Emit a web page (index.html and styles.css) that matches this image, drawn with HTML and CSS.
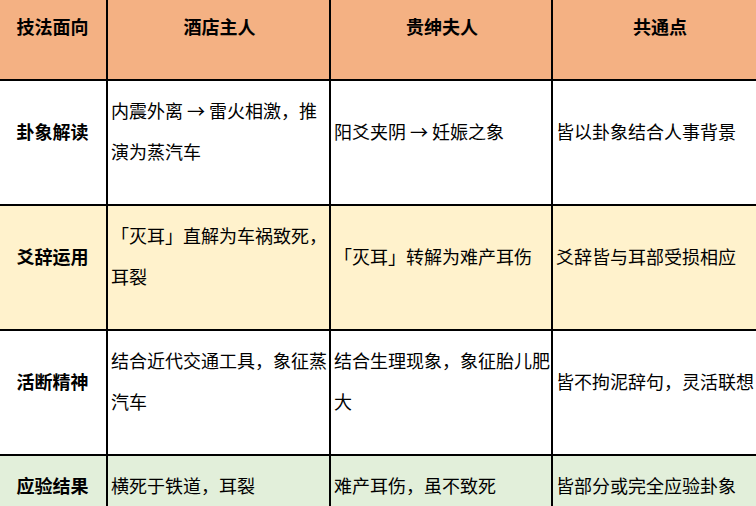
FILE: index.html
```html
<!DOCTYPE html>
<html lang="zh-CN">
<head>
<meta charset="utf-8">
<title>技法对比</title>
<link rel="stylesheet" href="styles.css">
</head>
<body>
<table class="cmp">
  <colgroup>
    <col class="c1">
    <col class="c2">
    <col class="c3">
    <col class="c4">
  </colgroup>
  <thead>
    <tr class="head">
      <th>技法面向</th>
      <th>酒店主人</th>
      <th>贵绅夫人</th>
      <th>共通点</th>
    </tr>
  </thead>
  <tbody>
    <tr>
      <th>卦象解读</th>
      <td>内震外离 → 雷火相激，推演为蒸汽车</td>
      <td>阳爻夹阴 → 妊娠之象</td>
      <td>皆以卦象结合人事背景</td>
    </tr>
    <tr class="cream">
      <th>爻辞运用</th>
      <td>「灭耳」直解为车祸致死，耳裂</td>
      <td>「灭耳」转解为难产耳伤</td>
      <td>爻辞皆与耳部受损相应</td>
    </tr>
    <tr>
      <th>活断精神</th>
      <td>结合近代交通工具，象征蒸汽车</td>
      <td>结合生理现象，象征胎儿肥大</td>
      <td>皆不拘泥辞句，灵活联想</td>
    </tr>
    <tr class="green">
      <th>应验结果</th>
      <td>横死于铁道，耳裂</td>
      <td>难产耳伤，虽不致死</td>
      <td>皆部分或完全应验卦象</td>
    </tr>
  </tbody>
</table>
</body>
</html>
```

FILE: styles.css
```css
html, body {
  margin: 0;
  padding: 0;
  background: #ffffff;
  overflow: hidden;
}

.cmp {
  border-collapse: collapse;
  table-layout: fixed;
  width: 770px;
  margin: -5px 0 0 -5px;
  font-family: "Noto Sans CJK SC", "Noto Sans", sans-serif;
  font-size: 18px;
  line-height: 41px;
  color: #000;
}

.c1 { width: 111px; }
.c2 { width: 223px; }
.c3 { width: 222px; }
.c4 { width: 214px; }

.cmp th,
.cmp td {
  border: 2px solid #000;
  padding: 9px 1px 32px 3px;
  vertical-align: middle;
  text-align: left;
  font-weight: normal;
}

.cmp th {
  text-align: center;
  font-weight: bold;
}

.head th {
  background: #f4b183;
}

.cream th,
.cream td {
  background: #fff2cc;
}

.green th,
.green td {
  background: #e2efda;
}
```
